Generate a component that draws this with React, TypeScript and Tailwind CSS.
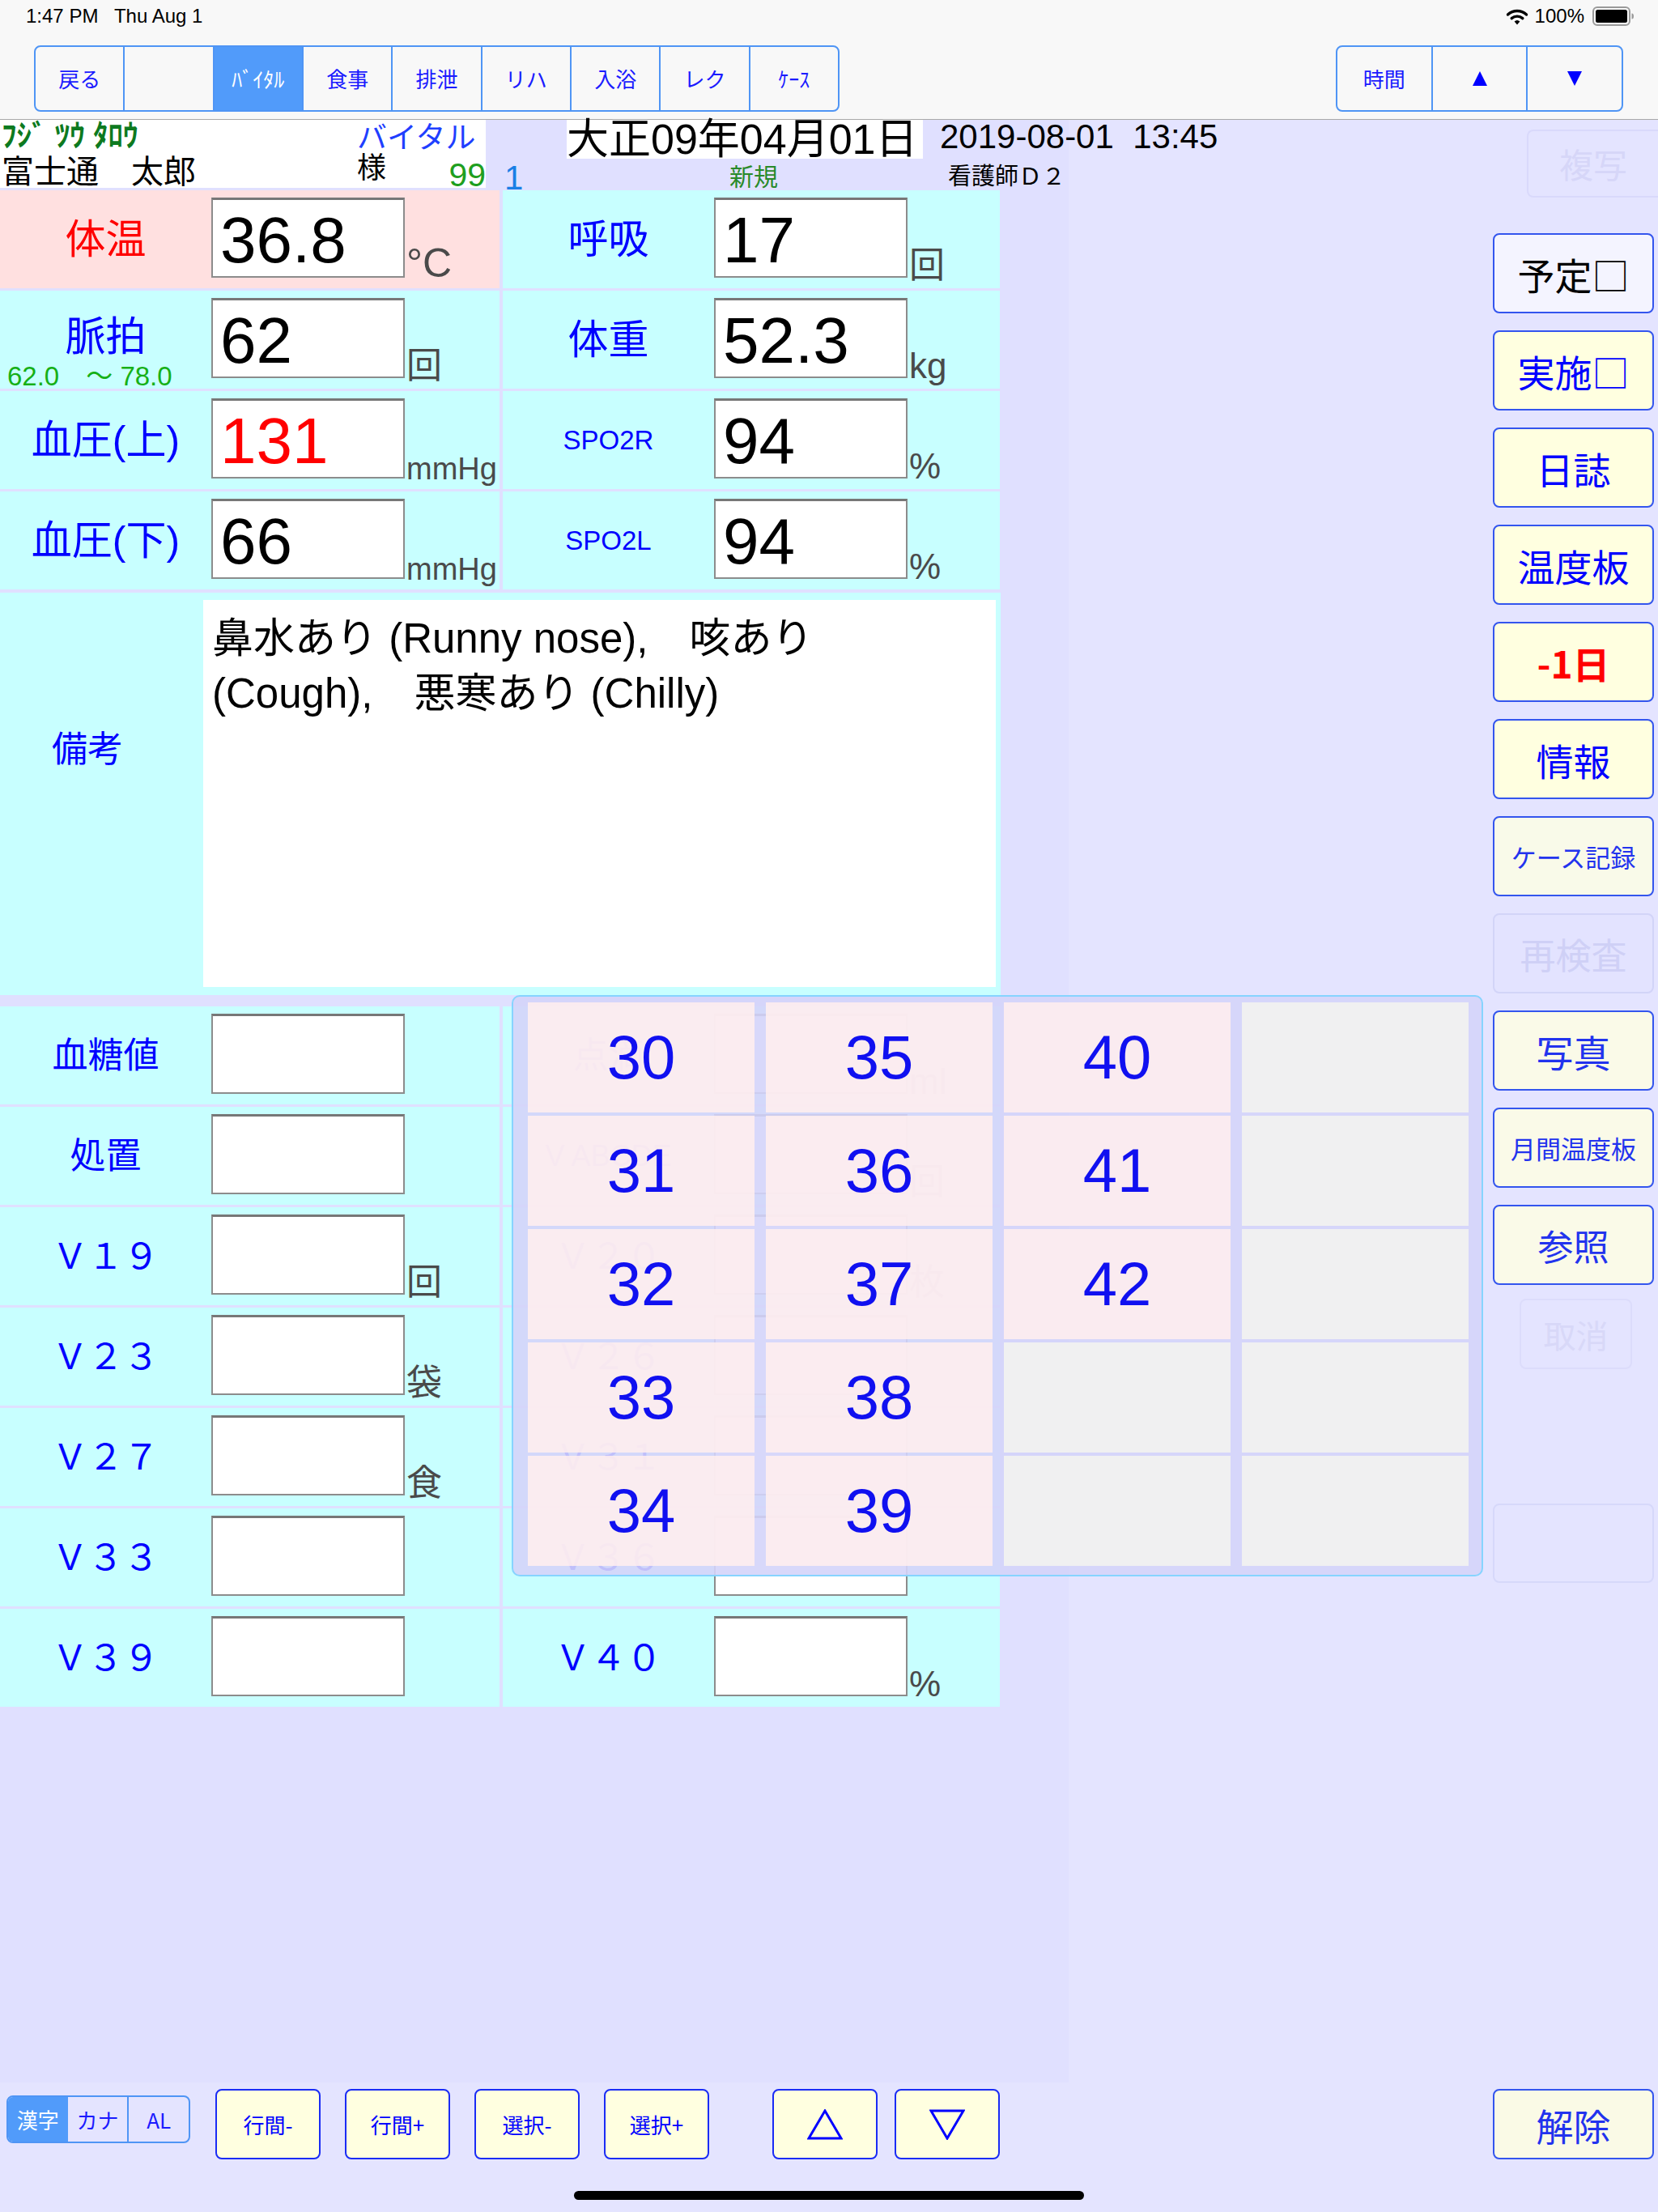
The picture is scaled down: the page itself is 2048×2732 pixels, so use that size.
import React from "react";

type FieldProps = {
  label: React.ReactNode;
  value?: string;
  valueColor?: string;
  unit?: string;
  unitSize?: string;
  bg?: string;
  labelBox?: string;
};

function Field({
  label,
  value,
  valueColor = "text-black",
  unit,
  unitSize = "text-[44px]",
  bg = "bg-[#c8ffff]",
  labelBox = "justify-center",
}: FieldProps) {
  return (
    <div className={`flex h-[121px] ${bg}`}>
      <div className={`w-[261px] shrink-0 flex flex-col items-center ${labelBox}`}>{label}</div>
      <div
        className={`mt-[9px] w-[239px] h-[99px] shrink-0 bg-white border-2 border-[#8c8c8c] border-t-[3px] border-t-[#777777] flex items-center pl-[9px] pt-[6px] text-[80px] leading-none ${valueColor}`}
      >
        {value}
      </div>
      {unit && (
        <div className={`flex items-end pb-[6px] pl-[2px] leading-none text-[#4a4a4a] whitespace-nowrap ${unitSize}`}>
          {unit}
        </div>
      )}
    </div>
  );
}

const Lbl = ({ children, cls = "text-[50px] text-[#0000ff]" }: { children: React.ReactNode; cls?: string }) => (
  <span className={`leading-none whitespace-nowrap ${cls}`}>{children}</span>
);

function SideBtn({ children, cls }: { children: React.ReactNode; cls: string }) {
  return (
    <div className={`w-[199px] h-[99px] rounded-[8px] border-2 flex items-center justify-center leading-none ${cls}`}>
      {children}
    </div>
  );
}

function ToolBtn({ children }: { children: React.ReactNode }) {
  return (
    <div className="w-[130px] h-[87px] rounded-[8px] border-2 border-[#1a2cf5] bg-[#ffffe0] flex items-center justify-center text-[26px] text-[#0000ff] leading-none">
      {children}
    </div>
  );
}

function Wifi() {
  return (
    <svg width="28" height="21" viewBox="0 0 28 21">
      <path d="M2.5 8 A17 17 0 0 1 25.5 8" stroke="black" strokeWidth="3.4" fill="none" strokeLinecap="round" />
      <path d="M7.2 12.6 A10.5 10.5 0 0 1 20.8 12.6" stroke="black" strokeWidth="3.4" fill="none" strokeLinecap="round" />
      <path d="M14 20.5 L10.6 16.6 A5 5 0 0 1 17.4 16.6 Z" fill="black" />
    </svg>
  );
}

function Battery() {
  return (
    <svg width="52" height="24" viewBox="0 0 52 24">
      <rect x="1" y="1" width="45" height="22" rx="5" fill="none" stroke="#9a9a9a" strokeWidth="2" />
      <rect x="4" y="4" width="39" height="16" rx="2.5" fill="black" />
      <path d="M48.5 8.5 a2.5 3.5 0 0 1 0 7 Z" fill="#9a9a9a" />
    </svg>
  );
}

const vitalLeft: FieldProps[] = [
  { label: <Lbl cls="text-[50px] text-[#ff0000]">体温</Lbl>, value: "36.8", unit: "°C", unitSize: "text-[50px]", bg: "bg-[#ffe0e0]" },
  {
    label: (
      <>
        <Lbl>脈拍</Lbl>
        <span className="mt-[6px] self-start pl-[9px] text-[33px] leading-[36px] text-[#16b016] whitespace-pre">62.0　～ 78.0</span>
      </>
    ),
    labelBox: "justify-start pt-[32px]",
    value: "62",
    unit: "回",
  },
  { label: <Lbl>血圧(上)</Lbl>, value: "131", valueColor: "text-[#ff0000]", unit: "mmHg", unitSize: "text-[38px]" },
  { label: <Lbl>血圧(下)</Lbl>, value: "66", unit: "mmHg", unitSize: "text-[38px]" },
];

const vitalRight: FieldProps[] = [
  { label: <Lbl>呼吸</Lbl>, value: "17", unit: "回" },
  { label: <Lbl>体重</Lbl>, value: "52.3", unit: "kg" },
  { label: <Lbl cls="text-[33px] text-[#0000ff]">SPO2R</Lbl>, value: "94", unit: "%" },
  { label: <Lbl cls="text-[33px] text-[#0000ff]">SPO2L</Lbl>, value: "94", unit: "%" },
];

const S = "text-[44px] text-[#0000ff]";
const lowerLeft: FieldProps[] = [
  { label: <Lbl cls={S}>血糖値</Lbl> },
  { label: <Lbl cls={S}>処置</Lbl> },
  { label: <Lbl cls={S}>Ｖ１９</Lbl>, unit: "回" },
  { label: <Lbl cls={S}>Ｖ２３</Lbl>, unit: "袋" },
  { label: <Lbl cls={S}>Ｖ２７</Lbl>, unit: "食" },
  { label: <Lbl cls={S}>Ｖ３３</Lbl> },
  { label: <Lbl cls={S}>Ｖ３９</Lbl> },
];
const lowerRight: FieldProps[] = [
  { label: <Lbl cls={S}>点滴</Lbl>, unit: "ml" },
  { label: <Lbl cls="text-[36px] text-[#0000ff]">V ABCDE</Lbl>, unit: "回" },
  { label: <Lbl cls={S}>Ｖ２０</Lbl>, unit: "枚" },
  { label: <Lbl cls={S}>Ｖ２６</Lbl> },
  { label: <Lbl cls={S}>Ｖ３１</Lbl> },
  { label: <Lbl cls={S}>Ｖ３６</Lbl> },
  { label: <Lbl cls={S}>Ｖ４０</Lbl>, unit: "%" },
];

const picks: (number | null)[] = [30, 31, 32, 33, 34, 35, 36, 37, 38, 39, 40, 41, 42, null, null, null, null, null, null, null];

const tabs = ["戻る", "", "ﾊﾞｲﾀﾙ", "食事", "排泄", "リハ", "入浴", "レク", "ｹｰｽ"];

export default function App() {
  return (
    <div className="w-[2048px] h-[2732px] overflow-hidden flex flex-col bg-[#e4e4ff] font-['Liberation_Sans','Noto_Sans_CJK_JP',sans-serif]">
      {/* status bar */}
      <div className="h-[40px] bg-[#f8f8f8] flex items-center px-[32px] text-[24px] leading-none text-black">
        <span className="whitespace-pre">1:47 PM   Thu Aug 1</span>
        <div className="ml-auto mr-[-3px] flex items-center gap-[10px]">
          <Wifi />
          <span className="-ml-[2px]">100%</span>
          <Battery />
        </div>
      </div>

      {/* nav bar */}
      <div className="h-[108px] bg-[#f8f8f8] border-b border-[#a9a9a9] flex items-start pt-[16px]">
        <div className="ml-[42px] w-[995px] h-[82px] rounded-[8px] border-2 border-[#4f95f5] overflow-hidden flex font-['Noto_Sans_CJK_JP',sans-serif]">
          {tabs.map((t, i) => (
            <div
              key={i}
              className={`flex-1 flex items-center justify-center text-[26px] leading-none ${i > 0 ? "border-l-2 border-[#4f95f5]" : ""} ${
                i === 2 ? "bg-[#519bfa] text-white" : "text-[#1b1bff]"
              }`}
            >
              {t}
            </div>
          ))}
        </div>
        <div className="ml-auto mr-[43px] w-[355px] h-[82px] rounded-[8px] border-2 border-[#4f95f5] overflow-hidden flex">
          <div className="flex-1 flex items-center justify-center text-[26px] leading-none text-[#1b1bff] font-['Noto_Sans_CJK_JP',sans-serif]">時間</div>
          <div className="flex-1 flex items-center justify-center border-l-2 border-[#4f95f5]">
            <svg width="18" height="18" viewBox="0 0 18 18">
              <polygon points="9,0 18,18 0,18" fill="#0000ff" />
            </svg>
          </div>
          <div className="flex-1 flex items-center justify-center border-l-2 border-[#4f95f5]">
            <svg width="18" height="18" viewBox="0 0 18 18">
              <polygon points="0,0 18,0 9,18" fill="#0000ff" />
            </svg>
          </div>
        </div>
      </div>

      <div className="flex">
        {/* main panel */}
        <div className="relative w-[1320px] h-[2424px] shrink-0 bg-[#e0e0ff]">
          {/* header */}
          <div className="flex h-[84px]">
            <div className="w-[600px] shrink-0 bg-white flex justify-between">
              <div className="flex flex-col pl-[2px]">
                <div className="mt-[2px] text-[37px] leading-[38px] font-bold text-[#0d7a20] whitespace-nowrap">ﾌｼﾞ ﾂｳ ﾀﾛｳ</div>
                <div className="mt-[3px] text-[40px] leading-[42px] text-black whitespace-nowrap">富士通　太郎</div>
              </div>
              <div className="w-[159px] shrink-0 flex flex-col">
                <div className="mt-[4px] text-[37px] leading-[38px] text-[#1f3fff] whitespace-nowrap">バイタル</div>
                <div className="flex-1 flex justify-between items-end">
                  <span className="mb-[6px] text-[36px] leading-[36px] text-black">様</span>
                  <span className="text-[41px] leading-[31px] text-[#1f9f1f]">99</span>
                </div>
              </div>
            </div>
            <div className="w-[100px] shrink-0 flex items-end pl-[23px]">
              <span className="text-[42px] leading-[30px] text-[#1a7fe6] -mb-[3px]">1</span>
            </div>
            <div className="w-[440px] shrink-0 flex flex-col">
              <div className="h-[48px] bg-white text-[52px] leading-[48px] text-black whitespace-nowrap">大正09年04月01日</div>
              <div className="mt-[8px] pl-[201px] text-[30px] leading-[30px] text-[#2a8a2a]">新規</div>
            </div>
            <div className="ml-[21px] shrink-0 flex flex-col">
              <div className="text-[42px] leading-[42px] text-black whitespace-pre">2019-08-01  13:45</div>
              <div className="mt-[14px] pl-[10px] text-[29px] leading-[29px] text-black whitespace-nowrap">看護師Ｄ２</div>
            </div>
          </div>

          {/* vital grid */}
          <div className="mt-[3px] w-[1235px] grid grid-cols-[617px_614px] gap-x-[4px] gap-y-[3px]">
            {vitalLeft.map((f, i) => (
              <React.Fragment key={i}>
                <Field {...f} />
                <Field {...vitalRight[i]} />
              </React.Fragment>
            ))}
          </div>

          {/* remarks */}
          <div className="mt-[4px] w-[1236px] h-[497px] bg-[#c8ffff] flex">
            <div className="w-[251px] shrink-0 pl-[64px] pt-[172px]">
              <Lbl cls="text-[44px] text-[#0000ff]">備考</Lbl>
            </div>
            <div className="mt-[9px] w-[979px] h-[478px] bg-white pl-[11px] pt-[14px] text-[51px] leading-[68px] text-black">
              鼻水あり (Runny nose),　咳あり
              <br />
              (Cough),　悪寒あり (Chilly)
            </div>
          </div>

          {/* lower grid */}
          <div className="mt-[14px] w-[1235px] grid grid-cols-[617px_614px] gap-x-[4px] gap-y-[3px]">
            {lowerLeft.map((f, i) => (
              <React.Fragment key={i}>
                <Field {...f} />
                <Field {...lowerRight[i]} />
              </React.Fragment>
            ))}
          </div>

          {/* number picker popup */}
          <div className="absolute left-[632px] top-[1081px] w-[1200px] h-[718px] rounded-[10px] border-2 border-[#86d4ff] bg-[rgba(212,212,250,0.9)] pl-[18px] pt-[7px] pr-[16px] pb-[11px] grid grid-cols-4 grid-rows-5 grid-flow-col gap-x-[14px] gap-y-[4px]">
            {picks.map((n, i) =>
              n === null ? (
                <div key={i} className="bg-[rgba(241,241,241,0.97)]" />
              ) : (
                <div key={i} className="bg-[rgba(255,238,238,0.88)] flex items-center justify-center text-[76px] leading-none text-[#1010f0]">
                  {n}
                </div>
              )
            )}
          </div>
        </div>

        {/* sidebar */}
        <div className="flex-1 flex flex-col items-end pr-[5px] font-['Noto_Sans_CJK_JP',sans-serif]">
          <div className="mt-[12px] mr-[-5px] w-[162px] h-[84px] rounded-l-[8px] border-2 border-r-0 border-[#d9d9fb] flex items-center justify-center text-[42px] leading-none text-[#d6d6f8]">
            複写
          </div>
          <div className="mt-[44px] flex flex-col gap-[21px]">
            <SideBtn cls="border-[#3355ee] bg-[#f4f4ff] text-[46px] text-black">予定□</SideBtn>
            <SideBtn cls="border-[#3355ee] bg-[#ffffe0] text-[46px] text-[#0000ff]">実施□</SideBtn>
            <SideBtn cls="border-[#3355ee] bg-[#ffffe0] text-[46px] text-[#0000ff]">日誌</SideBtn>
            <SideBtn cls="border-[#3355ee] bg-[#ffffe0] text-[46px] text-[#0000ff]">温度板</SideBtn>
            <SideBtn cls="border-[#3355ee] bg-[#ffffe0] text-[46px] text-[#ff0000] font-bold">-1日</SideBtn>
            <SideBtn cls="border-[#3355ee] bg-[#ffffe0] text-[46px] text-[#0000ff]">情報</SideBtn>
            <SideBtn cls="border-[#3355ee] bg-[#f9fae9] text-[31px] text-[#2233ee]">ケース記録</SideBtn>
            <SideBtn cls="border-[#d2d4f8] bg-[#e3e3ff] text-[44px] text-[#cfd0f6]">再検査</SideBtn>
            <SideBtn cls="border-[#3355ee] bg-[#fafae8] text-[46px] text-[#2233ee]">写真</SideBtn>
            <SideBtn cls="border-[#3355ee] bg-[#fafae8] text-[31px] text-[#2233ee]">月間温度板</SideBtn>
            <SideBtn cls="border-[#3355ee] bg-[#fafae8] text-[44px] text-[#2233ee]">参照</SideBtn>
          </div>
          <div className="mt-[17px] mr-[27px] w-[139px] h-[87px] rounded-[8px] border-2 border-[#dcdcfb] flex items-center justify-center text-[40px] leading-none text-[#d8d8f8]">
            取消
          </div>
          <div className="mt-[166px] w-[199px] h-[98px] rounded-[8px] border-2 border-[#d6d8fa]" />
        </div>
      </div>

      {/* bottom toolbar */}
      <div className="h-[160px] flex flex-col font-['Noto_Sans_CJK_JP',sans-serif]">
        <div className="flex items-start pt-[8px] pr-[5px]">
          <div className="ml-[8px] mt-[8px] w-[227px] h-[59px] rounded-[8px] border-2 border-[#4f95f5] overflow-hidden flex text-[26px] leading-none">
            <div className="flex-1 bg-[#519bfa] text-white flex items-center justify-center">漢字</div>
            <div className="flex-1 text-[#1b1bff] flex items-center justify-center">カナ</div>
            <div className="flex-1 text-[#1b1bff] flex items-center justify-center border-l-2 border-[#4f95f5]">AL</div>
          </div>
          <div className="ml-[31px] flex gap-[30px]">
            <ToolBtn>行間-</ToolBtn>
            <ToolBtn>行間+</ToolBtn>
            <ToolBtn>選択-</ToolBtn>
            <ToolBtn>選択+</ToolBtn>
          </div>
          <div className="ml-[78px] flex gap-[21px]">
            <ToolBtn>
              <svg width="44" height="38" viewBox="0 0 44 38">
                <polygon points="22,2 42,36 2,36" fill="none" stroke="#0000ff" strokeWidth="3" />
              </svg>
            </ToolBtn>
            <ToolBtn>
              <svg width="44" height="38" viewBox="0 0 44 38">
                <polygon points="2,2 42,2 22,36" fill="none" stroke="#0000ff" strokeWidth="3" />
              </svg>
            </ToolBtn>
          </div>
          <div className="ml-auto w-[199px] h-[87px] rounded-[8px] border-2 border-[#3355ee] bg-[#fafae6] flex items-center justify-center text-[46px] leading-none text-[#2233ee]">
            解除
          </div>
        </div>
        <div className="mt-[39px] mx-auto w-[630px] h-[11px] rounded-full bg-black" />
      </div>
    </div>
  );
}
